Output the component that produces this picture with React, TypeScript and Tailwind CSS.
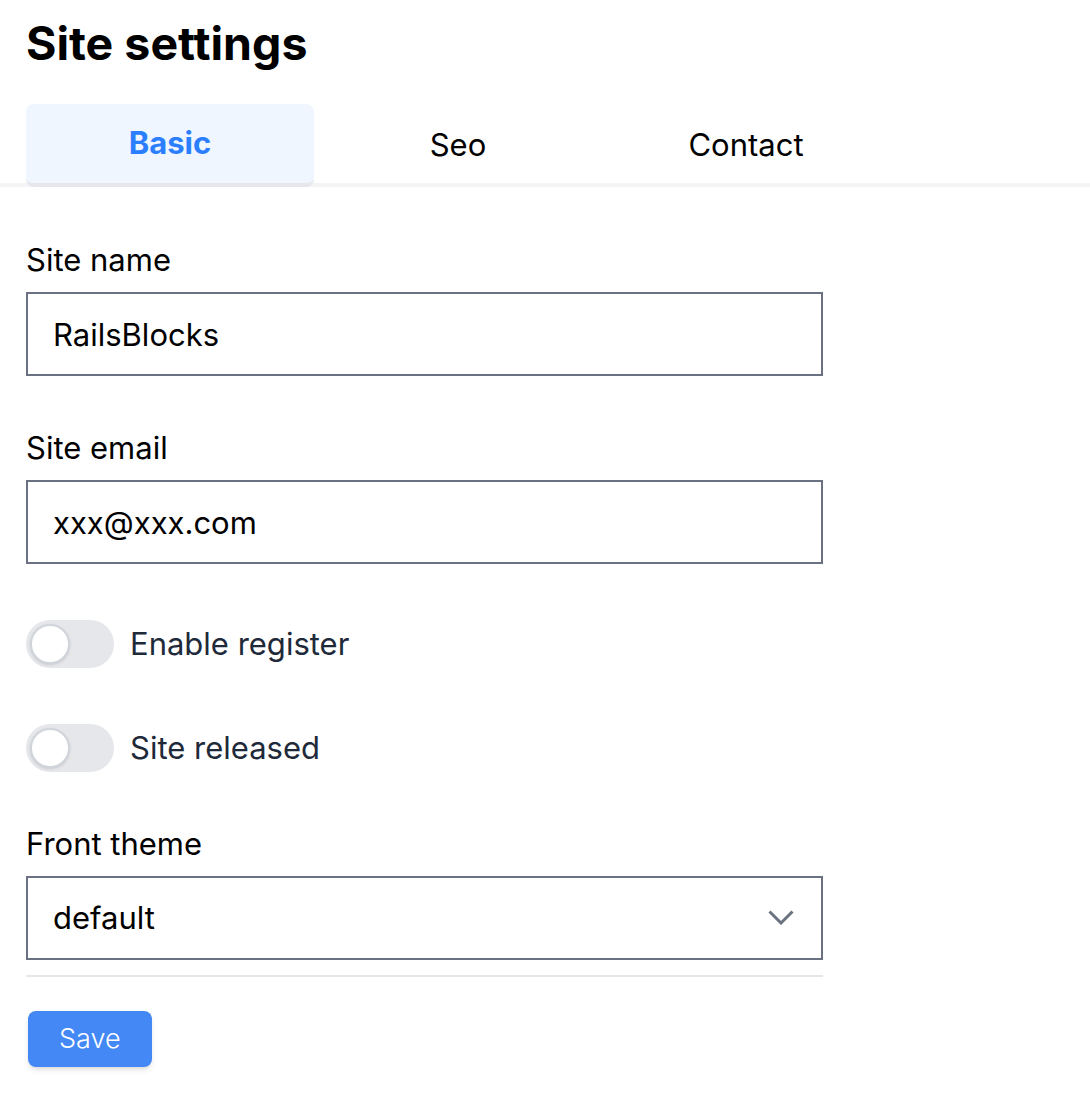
import React, { useState } from 'react';

const tabs = ['Basic', 'Seo', 'Contact'];

function Toggle({ label }: { label: string }) {
  const [on, setOn] = useState(false);
  return (
    <label className="flex items-center cursor-pointer">
      <button
        type="button"
        onClick={() => setOn(!on)}
        className={`relative w-[88px] h-[48px] rounded-full ${on ? 'bg-blue-500' : 'bg-gray-200'}`}
      >
        <span
          className={`absolute top-[4px] left-[4px] w-[40px] h-[40px] rounded-full bg-white border-2 border-gray-300 shadow-sm transition-transform ${on ? 'translate-x-[40px]' : ''}`}
        />
      </button>
      <span className="ml-4 text-[31px] leading-[48px] text-gray-800">{label}</span>
    </label>
  );
}

export default function App() {
  const [active, setActive] = useState('Basic');

  return (
    <div className="w-[1090px] min-h-[1106px] bg-white text-black font-['Inter',sans-serif]">
      {/* Titulo */}
      <h1 className="pt-[19px] px-[26px] text-[46.5px] leading-[48px] font-bold">Site settings</h1>

      {/* Abas */}
      <div className="mt-[37px] flex pl-[26px] border-b-4 border-gray-100">
        {tabs.map((tab) => (
          <button
            key={tab}
            type="button"
            onClick={() => setActive(tab)}
            className={`w-[288px] h-[83px] -mb-1 text-[31px] rounded-lg ${
              active === tab
                ? 'bg-blue-50 border-b-4 border-gray-200 text-blue-500 font-bold'
                : 'text-black'
            }`}
          >
            {tab}
          </button>
        ))}
      </div>

      <form className="px-[26px] w-[849px]" onSubmit={(e) => e.preventDefault()}>
        <div className="mt-[49px]">
          <label className="block text-[31px] leading-[48px] mb-[8px]">Site name</label>
          <input
            defaultValue="RailsBlocks"
            className="block w-full h-[84px] border-2 border-gray-500 px-[25px] text-[31px] outline-none"
          />
        </div>

        <div className="mt-[48px]">
          <label className="block text-[31px] leading-[48px] mb-[8px]">Site email</label>
          <input
            defaultValue="xxx@xxx.com"
            className="block w-full h-[84px] border-2 border-gray-500 px-[25px] text-[31px] outline-none"
          />
        </div>

        <div className="mt-[56px]">
          <Toggle label="Enable register" />
        </div>
        <div className="mt-[56px]">
          <Toggle label="Site released" />
        </div>

        <div className="mt-[48px]">
          <label className="block text-[31px] leading-[48px] mb-[8px]">Front theme</label>
          <div className="relative">
            <select className="block w-full h-[84px] border-2 border-gray-500 px-[25px] text-[31px] bg-white appearance-none outline-none">
              <option>default</option>
            </select>
            <svg
              className="absolute right-[29px] top-[34px] pointer-events-none"
              width="26"
              height="15"
              viewBox="0 0 26 15"
              fill="none"
            >
              <path d="M1.5 1.5L13 13L24.5 1.5" stroke="#6b7280" strokeWidth="3" />
            </svg>
          </div>
        </div>

        <div className="mt-[15px] h-[2px] bg-gray-200" />

        <button
          type="submit"
          className="mt-[34px] ml-[2px] h-[56px] px-[31px] rounded-lg bg-[#4388f5] text-white text-[27px] font-light shadow-md"
        >
          Save
        </button>
      </form>
    </div>
  );
}
